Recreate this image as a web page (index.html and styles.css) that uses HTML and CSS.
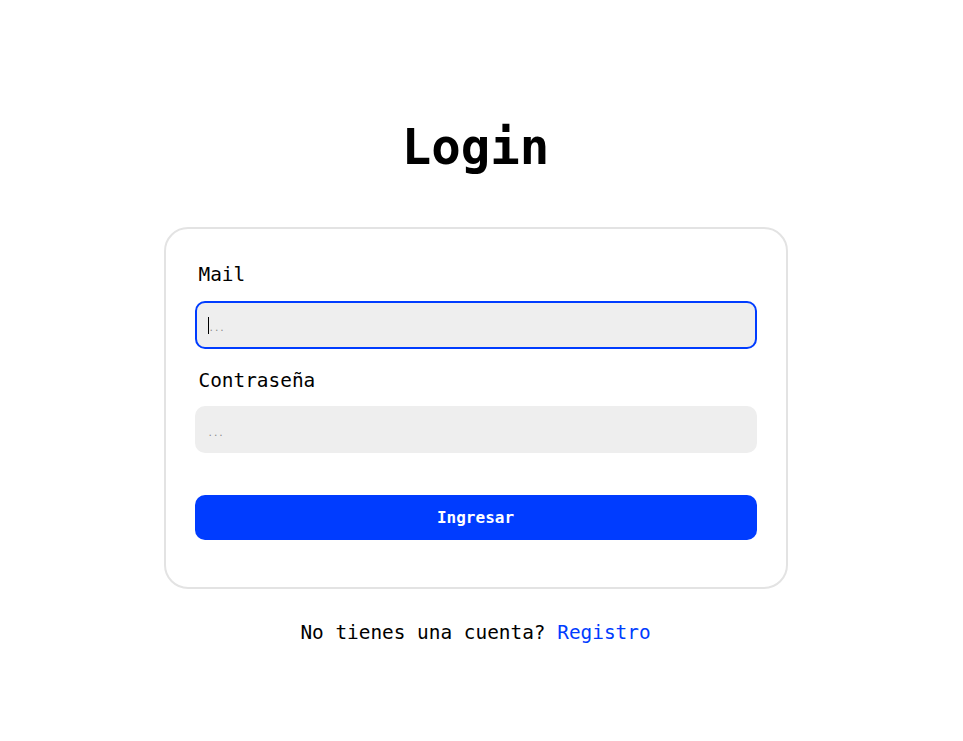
FILE: index.html
```html
<!DOCTYPE html>
<html lang="es">
<head>
<meta charset="utf-8">
<title>Login</title>
<link rel="stylesheet" href="styles.css">
</head>
<body>
<main class="page">
  <h1 class="title">Login</h1>
  <form class="card">
    <label class="label" for="mail">Mail</label>
    <div class="input input-focus"><span class="caret"></span><span class="ph">...</span></div>
    <label class="label label-second" for="pass">Contraseña</label>
    <div class="input"><span class="ph">...</span></div>
    <button type="button" class="btn">Ingresar</button>
  </form>
  <p class="foot">No tienes una cuenta? <a class="link" href="#">Registro</a></p>
</main>
</body>
</html>
```
FILE: styles.css
```css
* { box-sizing: border-box; }
html, body { margin: 0; padding: 0; background: #ffffff; }
body {
  font-family: "DejaVu Sans Mono", "Liberation Mono", monospace;
  color: #000;
}
.page {
  display: flex;
  flex-direction: column;
  align-items: center;
  padding: 120px 12px 0 0;
}
.title {
  margin: 0;
  font-size: 49px;
  line-height: 56px;
  font-weight: 700;
}
.card {
  margin-top: 51px;
  width: 624px;
  border: 2px solid #e3e3e3;
  border-radius: 24px;
  padding: 34px 29px 47px 29px;
  display: flex;
  flex-direction: column;
}
.label {
  font-size: 19.4px;
  line-height: 24px;
  padding-left: 4px;
  margin-bottom: 14px;
}
.label-second { margin-top: 20px; margin-bottom: 13px; }
.input {
  height: 48px;
  background: #eeeeee;
  border: 2px solid #eeeeee;
  border-radius: 10px;
  display: flex;
  align-items: center;
  padding-left: 11px;
}
.input + .label-second + .input { height: 47px; }
.input-focus { border-color: #003cff; }
.caret {
  width: 1px;
  height: 17px;
  background: #000;
}
.ph {
  font-size: 9px;
  color: #8a8a8a;
  margin-top: 6px;
}
.btn {
  margin-top: 42px;
  height: 45px;
  border: none;
  border-radius: 10px;
  background: #003cff;
  color: #ffffff;
  font-family: "DejaVu Sans Mono", "Liberation Mono", monospace;
  font-weight: 700;
  font-size: 16px;
}
.foot {
  margin: 32px 0 0 0;
  font-size: 19.4px;
  line-height: 24px;
}
.link { color: #003cff; text-decoration: none; }
```
